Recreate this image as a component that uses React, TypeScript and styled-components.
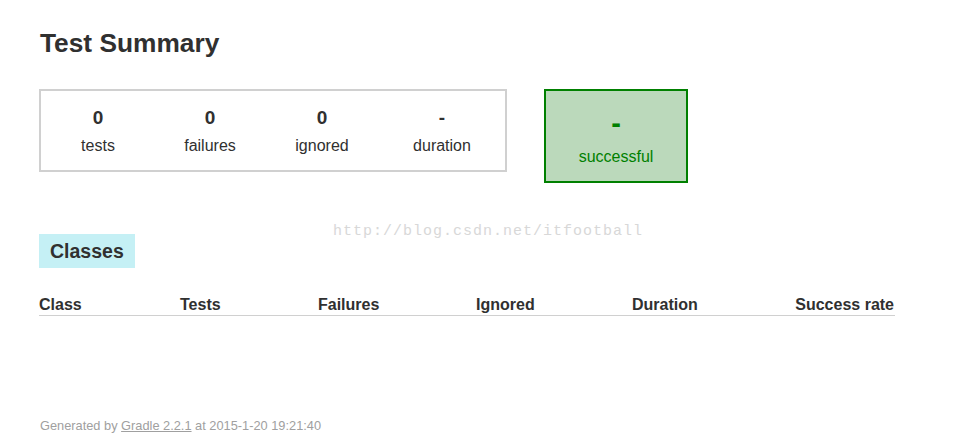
import React from "react";
import styled, { createGlobalStyle } from "styled-components";

const GlobalStyle = createGlobalStyle`
  html, body {
    margin: 0;
    padding: 0;
    background: #ffffff;
  }
  body {
    font-family: "Liberation Sans", Arial, sans-serif;
    font-size: 16px;
    color: #303030;
  }
`;

const Page = styled.div`
  position: relative;
  padding: 28px 0 0 39px;
`;

const Title = styled.h1`
  margin: 0;
  padding-left: 1px;
  font-size: 26.3px;
  line-height: 30px;
  font-weight: bold;
  color: #303030;
`;

const SummaryRow = styled.div`
  display: flex;
  align-items: flex-start;
  gap: 37px;
  margin-top: 31px;
`;

const SummaryGroup = styled.div`
  display: flex;
  border: 2px solid #d0d0d0;
`;

const InfoBox = styled.div<{ $w: number }>`
  box-sizing: border-box;
  width: ${(p) => p.$w}px;
  padding: 16px 0 15px 2px;
  text-align: center;
`;

const Counter = styled.p`
  margin: 0 0 8px;
  font-size: 19px;
  line-height: 22px;
  font-weight: bold;
`;

const Label = styled.p<{ $success?: boolean }>`
  margin: 0;
  font-size: 16px;
  line-height: 18px;
  color: ${(p) => (p.$success ? "#008000" : "#303030")};
`;

const SuccessBox = styled.div`
  width: 140px;
  padding: 16px 0 15px;
  text-align: center;
  background: #bbd9bb;
  border: 2px solid #008000;
  color: #008000;
`;

const Percent = styled.p`
  margin: 0 0 8px;
  font-size: 29px;
  line-height: 33px;
  font-weight: bold;
  color: #008000;
`;

const Tabs = styled.div`
  display: flex;
  margin-top: 51px;
`;

const TabLink = styled.h2`
  margin: 0;
  height: 34px;
  padding: 1px 11px 0 11px;
  box-sizing: border-box;
  font-size: 19.5px;
  line-height: 33px;
  font-weight: bold;
  background: #c5f0f5;
  color: #303030;
`;

const Table = styled.div`
  display: grid;
  grid-template-columns: 141px 138px 158px 156px 1fr auto;
  width: 856px;
  margin-top: 27px;
  border-bottom: 1px solid #d0d0d0;
`;

const Th = styled.div<{ $right?: boolean }>`
  font-size: 16px;
  line-height: 18px;
  font-weight: bold;
  padding: 1px 1px 1px 0;
  text-align: ${(p) => (p.$right ? "right" : "left")};
`;

const Footer = styled.div`
  margin-top: 102px;
  padding-left: 1px;
  font-size: 12.8px;
  line-height: 15px;
  color: #a0a0a0;
  white-space: nowrap;

  a {
    color: #a0a0a0;
    text-decoration: underline;
  }
`;

const Watermark = styled.div`
  position: absolute;
  left: 333px;
  top: 224px;
  font-family: "Liberation Mono", "Courier New", monospace;
  font-size: 15px;
  line-height: 15px;
  letter-spacing: 1px;
  color: #d8d8d8;
  white-space: nowrap;
  pointer-events: none;
`;

const stats = [
  { value: "0", label: "tests", w: 112 },
  { value: "0", label: "failures", w: 112 },
  { value: "0", label: "ignored", w: 112 },
  { value: "-", label: "duration", w: 128 },
];

const headers = ["Class", "Tests", "Failures", "Ignored", "Duration", "Success rate"];

export default function App() {
  return (
    <>
      <GlobalStyle />
      <Page>
        <Title>Test Summary</Title>
        <SummaryRow>
          <SummaryGroup>
            {stats.map((s) => (
              <InfoBox key={s.label} $w={s.w}>
                <Counter>{s.value}</Counter>
                <Label>{s.label}</Label>
              </InfoBox>
            ))}
          </SummaryGroup>
          <SuccessBox>
            <Percent>-</Percent>
            <Label $success>successful</Label>
          </SuccessBox>
        </SummaryRow>
        <Tabs>
          <TabLink>Classes</TabLink>
        </Tabs>
        <Table>
          {headers.map((h, i) => (
            <Th key={h} $right={i === headers.length - 1}>
              {h}
            </Th>
          ))}
        </Table>
        <Footer>
          Generated by <a href="#">Gradle 2.2.1</a> at 2015-1-20 19:21:40
        </Footer>
        <Watermark>http://blog.csdn.net/itfootball</Watermark>
      </Page>
    </>
  );
}
